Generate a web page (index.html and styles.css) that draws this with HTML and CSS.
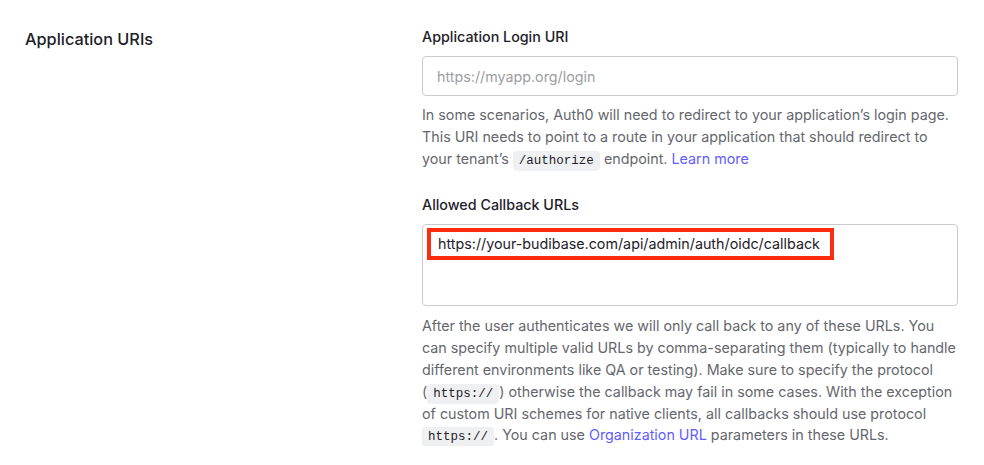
FILE: index.html
```html
<!DOCTYPE html>
<html lang="en">
<head>
<meta charset="utf-8">
<title>Application URIs</title>
<link rel="stylesheet" href="styles.css">
</head>
<body>
<section class="settings-row">
  <h2 class="row-title">Application URIs</h2>
  <div class="fields">
    <div class="field">
      <label class="field-label" for="login-uri">Application Login URI</label>
      <input class="text-input" id="login-uri" type="text" placeholder="https://myapp.org/login">
      <p class="help">In some scenarios, Auth0 will need to redirect to your application’s login page. This URI needs to point to a route in your application that should redirect to your tenant’s <code class="code">/authorize</code> endpoint. <a class="link" href="#">Learn more</a></p>
    </div>
    <div class="field">
      <label class="field-label">Allowed Callback URLs</label>
      <div class="text-area"><span class="highlight">https://your-budibase.com/api/admin/auth/oidc/callback</span></div>
      <p class="help help-long">After the user authenticates we will only call back to any of these URLs. You can specify multiple valid URLs by comma-separating them (typically to handle different environments like QA or testing). Make sure to specify the protocol (<code class="code">https://</code>) otherwise the callback may fail in some cases. With the exception of custom URI schemes for native clients, all callbacks should use protocol <code class="code">https://</code>. You can use <a class="link" href="#">Organization URL</a> parameters in these URLs.</p>
    </div>
  </div>
</section>
</body>
</html>
```
FILE: styles.css
```css
* { box-sizing: border-box; }
html, body {
  margin: 0;
  background: #ffffff;
  font-family: Inter, "Noto Sans", sans-serif;
  color: #1e212a;
}
.settings-row {
  display: grid;
  grid-template-columns: 397px 536px;
  padding: 27px 0 0 25px;
}
.row-title {
  margin: 0;
  font-size: 16.3px;
  line-height: 24px;
  font-weight: 500;
  color: #1e212a;
}
.fields {
  display: flex;
  flex-direction: column;
  gap: 26px;
}
.field {
  display: flex;
  flex-direction: column;
}
.field-label {
  font-size: 14.3px;
  line-height: 20px;
  font-weight: 500;
  color: #1e212a;
  margin-bottom: 9px;
}
.text-input {
  height: 40px;
  width: 100%;
  border: 1px solid #c9cace;
  border-radius: 4px;
  padding: 0 14px;
  font-family: inherit;
  font-size: 14.3px;
  color: #1e212a;
  outline: none;
}
.text-input::placeholder { color: #9b9da3; }
.text-area {
  height: 82px;
  border: 1px solid #c9cace;
  border-radius: 4px;
  padding: 3px 4px 4px;
  display: flex;
  align-items: flex-start;
}
.highlight {
  border: 4px solid #ff2b0f;
  padding: 0 10px 0 7px;
  font-size: 14.3px;
  line-height: 24px;
  color: #1e212a;
  white-space: nowrap;
}
.help {
  margin: 8px 0 0;
  font-size: 14.3px;
  line-height: 21.8px;
  color: #65676e;
}
.help-long { margin-top: 9px; }
.code {
  font-family: "Liberation Mono", "DejaVu Sans Mono", monospace;
  font-size: 12.5px;
  line-height: 1;
  background: #eff0f2;
  color: #1e212a;
  border-radius: 4px;
  padding: 3px 6px;
}
.link {
  color: #635dff;
  text-decoration: none;
}
```
